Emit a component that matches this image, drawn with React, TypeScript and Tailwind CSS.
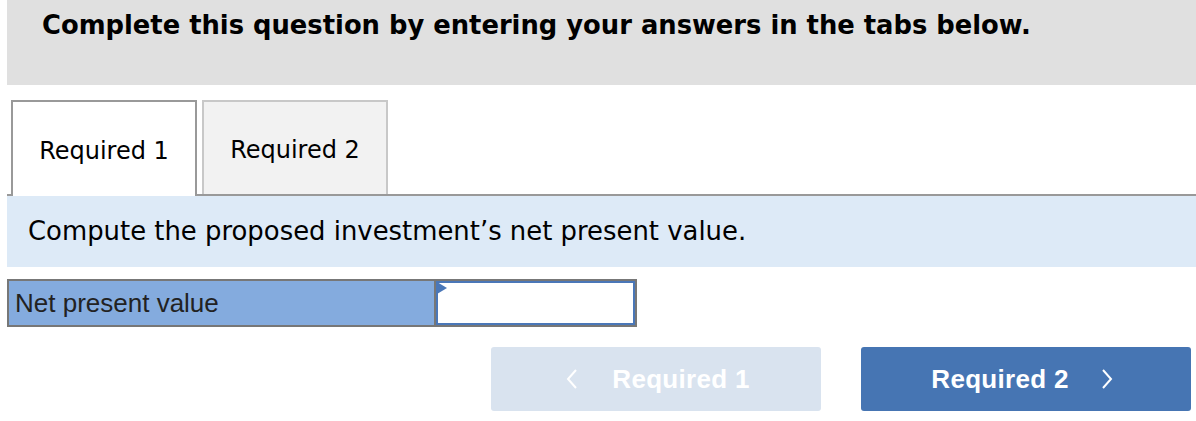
const verdana = { fontFamily: '"DejaVu Sans", Verdana, sans-serif' };
const arial = { fontFamily: '"Liberation Sans", Arial, sans-serif' };

const Chevron = ({ dir }: { dir: "left" | "right" }) => (
  <svg width="12" height="20" viewBox="0 0 12 20" fill="none" stroke="white" strokeWidth="2">
    {dir === "left" ? <path d="M10 1 L2 10 L10 19" /> : <path d="M2 1 L10 10 L2 19" />}
  </svg>
);

export default function App() {
  return (
    <div className="w-[1196px] h-[421px] bg-white pl-[7px] overflow-hidden" style={verdana}>
      <div className="h-[85px] bg-[#e0e0e0] pl-[35px] pt-[6px]">
        <h1 className="text-[25.8px] font-bold text-black">
          Complete this question by entering your answers in the tabs below.
        </h1>
      </div>

      <div className="mt-[15px] flex items-end h-[96px] border-b-2 border-[#999]">
        <div className="ml-[4px] w-[186px] h-[96px] -mb-[2px] bg-white border-2 border-b-0 border-[#999] flex items-center justify-center pt-[4px] text-[24px] text-black">
          Required 1
        </div>
        <div className="ml-[5px] w-[186px] h-[94px] bg-[#f2f2f2] border-2 border-b-0 border-[#c8c8c8] flex items-center justify-center pt-[4px] text-[24px] text-black">
          Required 2
        </div>
      </div>

      <div className="h-[71px] bg-[#ddeaf7] pl-[21px] flex items-center text-[25.9px] text-black">
        Compute the proposed investment’s net present value.
      </div>

      <div className="mt-[12px] w-[630px] h-[48px] flex border-2 border-[#777]" style={arial}>
        <div className="w-[427px] bg-[#84abde] border-r-2 border-[#777] pl-[6px] flex items-center text-[26px] text-[#222]">
          Net present value
        </div>
        <div className="relative flex-1 bg-white border-2 border-[#4a77b8]">
          <svg className="absolute -left-[1px] -top-[1px]" width="10" height="12" viewBox="0 0 10 12">
            <path d="M0 0 L10 6 L0 12 Z" fill="#4a77b8" />
          </svg>
          <input className="w-full h-full outline-none bg-transparent" />
        </div>
      </div>

      <div className="mt-[20px] flex justify-end gap-[40px] pr-[5px]" style={arial}>
        <button className="w-[330px] h-[64px] rounded-[3px] bg-[#d9e3ef] text-white text-[26px] font-bold flex items-center justify-center gap-[34px] pl-[4px]">
          <Chevron dir="left" />
          <span className="tracking-[0.3px]">Required 1</span>
        </button>
        <button className="w-[330px] h-[64px] rounded-[3px] bg-[#4675b3] text-white text-[26px] font-bold flex items-center justify-center gap-[32px] pr-[8px]">
          <span className="tracking-[0.3px]">Required 2</span>
          <Chevron dir="right" />
        </button>
      </div>
    </div>
  );
}
